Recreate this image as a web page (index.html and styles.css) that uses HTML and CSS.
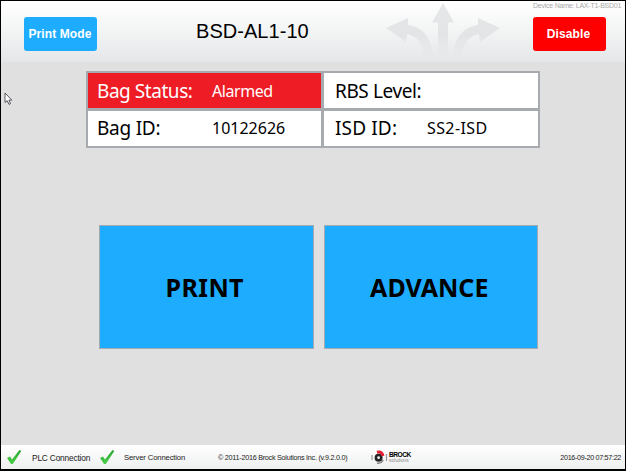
FILE: index.html
```html
<!DOCTYPE html>
<html lang="en">
<head>
<meta charset="utf-8">
<title>BSD-AL1-10</title>
<link rel="stylesheet" href="styles.css">
</head>
<body>
<div class="screen">
  <header class="header">
    <button class="btn mode"><span>Print Mode</span></button>
    <h1 class="title"><span>BSD-AL1-10</span></h1>
    <svg class="arrows" width="116" height="58" viewBox="0 0 116 58">
      <defs><linearGradient id="fade" gradientUnits="userSpaceOnUse" x1="0" y1="0" x2="0" y2="58"><stop offset="0" stop-color="#e5e7e8"/><stop offset=".6" stop-color="#e2e4e5"/><stop offset="1" stop-color="#e1e3e4" stop-opacity="0"/></linearGradient></defs>
      <g fill="url(#fade)">
        <path d="M57 2L68 21.500H62V57H52V21.500H46Z"/>
        <path d="M0 27L22 17V24C37 26 46 37 47 57H38C37 43 32 35 21 33L20 41Z"/>
        <path d="M114 27L92 17V24C77 26 68 37 67 57H76C77 43 82 35 93 33L94 41Z"/>
      </g>
    </svg>
    <div class="side">
      <div class="device"><span>Device Name: LAX-T1-BSD01</span></div>
      <button class="btn disable"><span>Disable</span></button>
    </div>
  </header>
  <main class="main">
    <div class="info">
      <div class="cell alarm"><span class="label l1">Bag Status:</span><span class="value v1">Alarmed</span></div>
      <div class="cell"><span class="label l2">RBS Level:</span></div>
      <div class="cell low"><span class="label l3">Bag ID:</span><span class="value v2">10122626</span></div>
      <div class="cell low"><span class="label l4">ISD ID:</span><span class="value v3">SS2-ISD</span></div>
    </div>
    <div class="actions">
      <button class="action"><span class="print">PRINT</span></button>
      <button class="action"><span class="advance">ADVANCE</span></button>
    </div>
    <svg class="cursor" width="9" height="14" viewBox="0 0 9 14"><path d="M1 1V10.500L3.200 8.700L5 12.400L6.500 11.700L4.900 8.100H7.800Z" fill="#fff" stroke="#454550" stroke-width=".9"/></svg>
  </main>
  <footer class="footer">
    <svg class="check" width="16" height="16" viewBox="0 0 16 16"><defs><linearGradient id="green" x2="0" y2="1"><stop stop-color="#2aa436"/><stop offset="1" stop-color="#4bd047"/></linearGradient></defs><path d="M1 9L4 7.500L6 10.500L13.500 1L15.300 2L6.800 15H5Z" fill="url(#green)"/></svg>
    <div class="foot plc"><span>PLC Connection</span></div>
    <svg class="check" width="16" height="16" viewBox="0 0 16 16"><path d="M1 9L4 7.500L6 10.500L13.500 1L15.300 2L6.800 15H5Z" fill="url(#green)"/></svg>
    <div class="foot server"><span>Server Connection</span></div>
    <div class="foot copy"><span>© 2011-2016 Brock Solutions Inc. (v.9.2.0.0)</span></div>
    <div class="logo">
      <svg width="17" height="15" viewBox="0 0 17 15"><g fill="none"><path d="M1 5V10M15.500 4V11" stroke="#999" stroke-width="1.2"/><circle cx="7.600" cy="7.700" r="2.700" stroke="#242424" stroke-width="2.600"/><path d="M6 2.300Q11 1 12 6" stroke="#e31e30" stroke-width="3"/><path d="M6 13Q10 14 12.300 10" stroke="#888" stroke-width="1.500"/></g></svg>
      <div class="brand"><b>BROCK</b><span>solutions</span></div>
    </div>
    <div class="foot time"><span>2016-09-20 07:57:22</span></div>
  </footer>
</div>
</body>
</html>
```
FILE: styles.css
```css
* { box-sizing: border-box; }
body { margin: 0; }
.screen {
  width: 626px; height: 471px; display: flex; flex-direction: column;
  border: 1px solid #000; border-bottom-width: 2px; background: #e0e0e0;
  font-family: "Liberation Sans", sans-serif; color: #000; position: relative;
}
span { white-space: nowrap; }
.header {
  height: 61px; display: flex; align-items: flex-start;
  background: linear-gradient(#fff, #f4f5f5 45%, #e5e6e8);
}
.btn {
  border: 0; padding: 0; border-radius: 3px; color: #fff; width: 73px; height: 34px;
  font: bold 12px "Liberation Sans", sans-serif; display: flex; align-items: center; justify-content: center;
}
.mode { background: #1eacff; margin: 16px 0 0 23px; padding-right: 1px; letter-spacing: .1px; }
.title { margin: 18px 0 0 99px; width: 190px; font-size: 20px; line-height: 24px; font-weight: 400; letter-spacing: .05px; }
.arrows { flex: none; }
.side { margin-left: auto; width: 92px; display: flex; flex-direction: column; align-items: flex-start; }
.device { height: 9px; line-height: 9px; font-size: 7px; letter-spacing: -.24px; color: #aaa; }
.disable { background: #f00; margin-top: 7px; padding-right: 2px; letter-spacing: .15px; }
.main { flex: 1; padding: 9px 0 0 85px; }
.info {
  width: 454px; height: 77px; padding: 2px; background: #a7abb0;
  display: grid; grid-template-columns: 233px 214px; grid-template-rows: 35px 35px; gap: 3px;
}
.cell {
  background: #fff; display: flex; align-items: center; padding-left: 9px;
  font-family: "Noto Sans", sans-serif;
}
.cell:nth-child(even) { padding-left: 11px; }
.low { padding-bottom: 2px; }
.alarm { background: #ee1c25; color: #fff; }
.label { width: 115px; font-size: 19px; }
.l1 { letter-spacing: -.45px; }
.l2 { letter-spacing: -.4px; }
.l3 { letter-spacing: -.25px; }
.l4 { width: 92px; letter-spacing: .15px; }
.value { font-size: 16px; }
.v1 { letter-spacing: -.45px; }
.v3 { letter-spacing: .4px; }
.actions { display: flex; gap: 10px; margin: 77px 0 0 13px; }
.action {
  width: 214.5px; height: 124px; border: 1px solid #a3aab2; padding: 0 3px 1px 0; background: #1eacff;
  font: bold 25px "Noto Sans", sans-serif; color: #000;
}
.print { letter-spacing: .4px; }
.cursor { position: absolute; left: 3px; top: 91px; }
.footer {
  height: 24px; display: flex; align-items: center;
  background: linear-gradient(#fff, #eeefef);
}
.check { flex: none; margin-left: 5px; }
.foot { line-height: 12px; padding-top: 2px; color: #222; }
.plc { width: 62px; margin-left: 10px; font-size: 8.4px; letter-spacing: -.2px; }
.server { width: 65px; margin-left: 9px; font-size: 7.7px; letter-spacing: -.15px; }
.copy { width: 133px; margin-left: 29px; font-size: 7.2px; letter-spacing: -.25px; }
.logo { display: flex; align-items: center; margin-left: 20px; width: 42px; gap: 1px; }
.brand { font-size: 6.6px; line-height: 6px; display: flex; flex-direction: column; letter-spacing: -.4px; padding-top: 1px; }
.brand b { letter-spacing: -.5px; }
.brand span { font-size: 5px; line-height: 5px; color: #888; letter-spacing: 0; }
.time { margin: 0 4px 0 auto; font-size: 7.2px; letter-spacing: -.32px; }
```
